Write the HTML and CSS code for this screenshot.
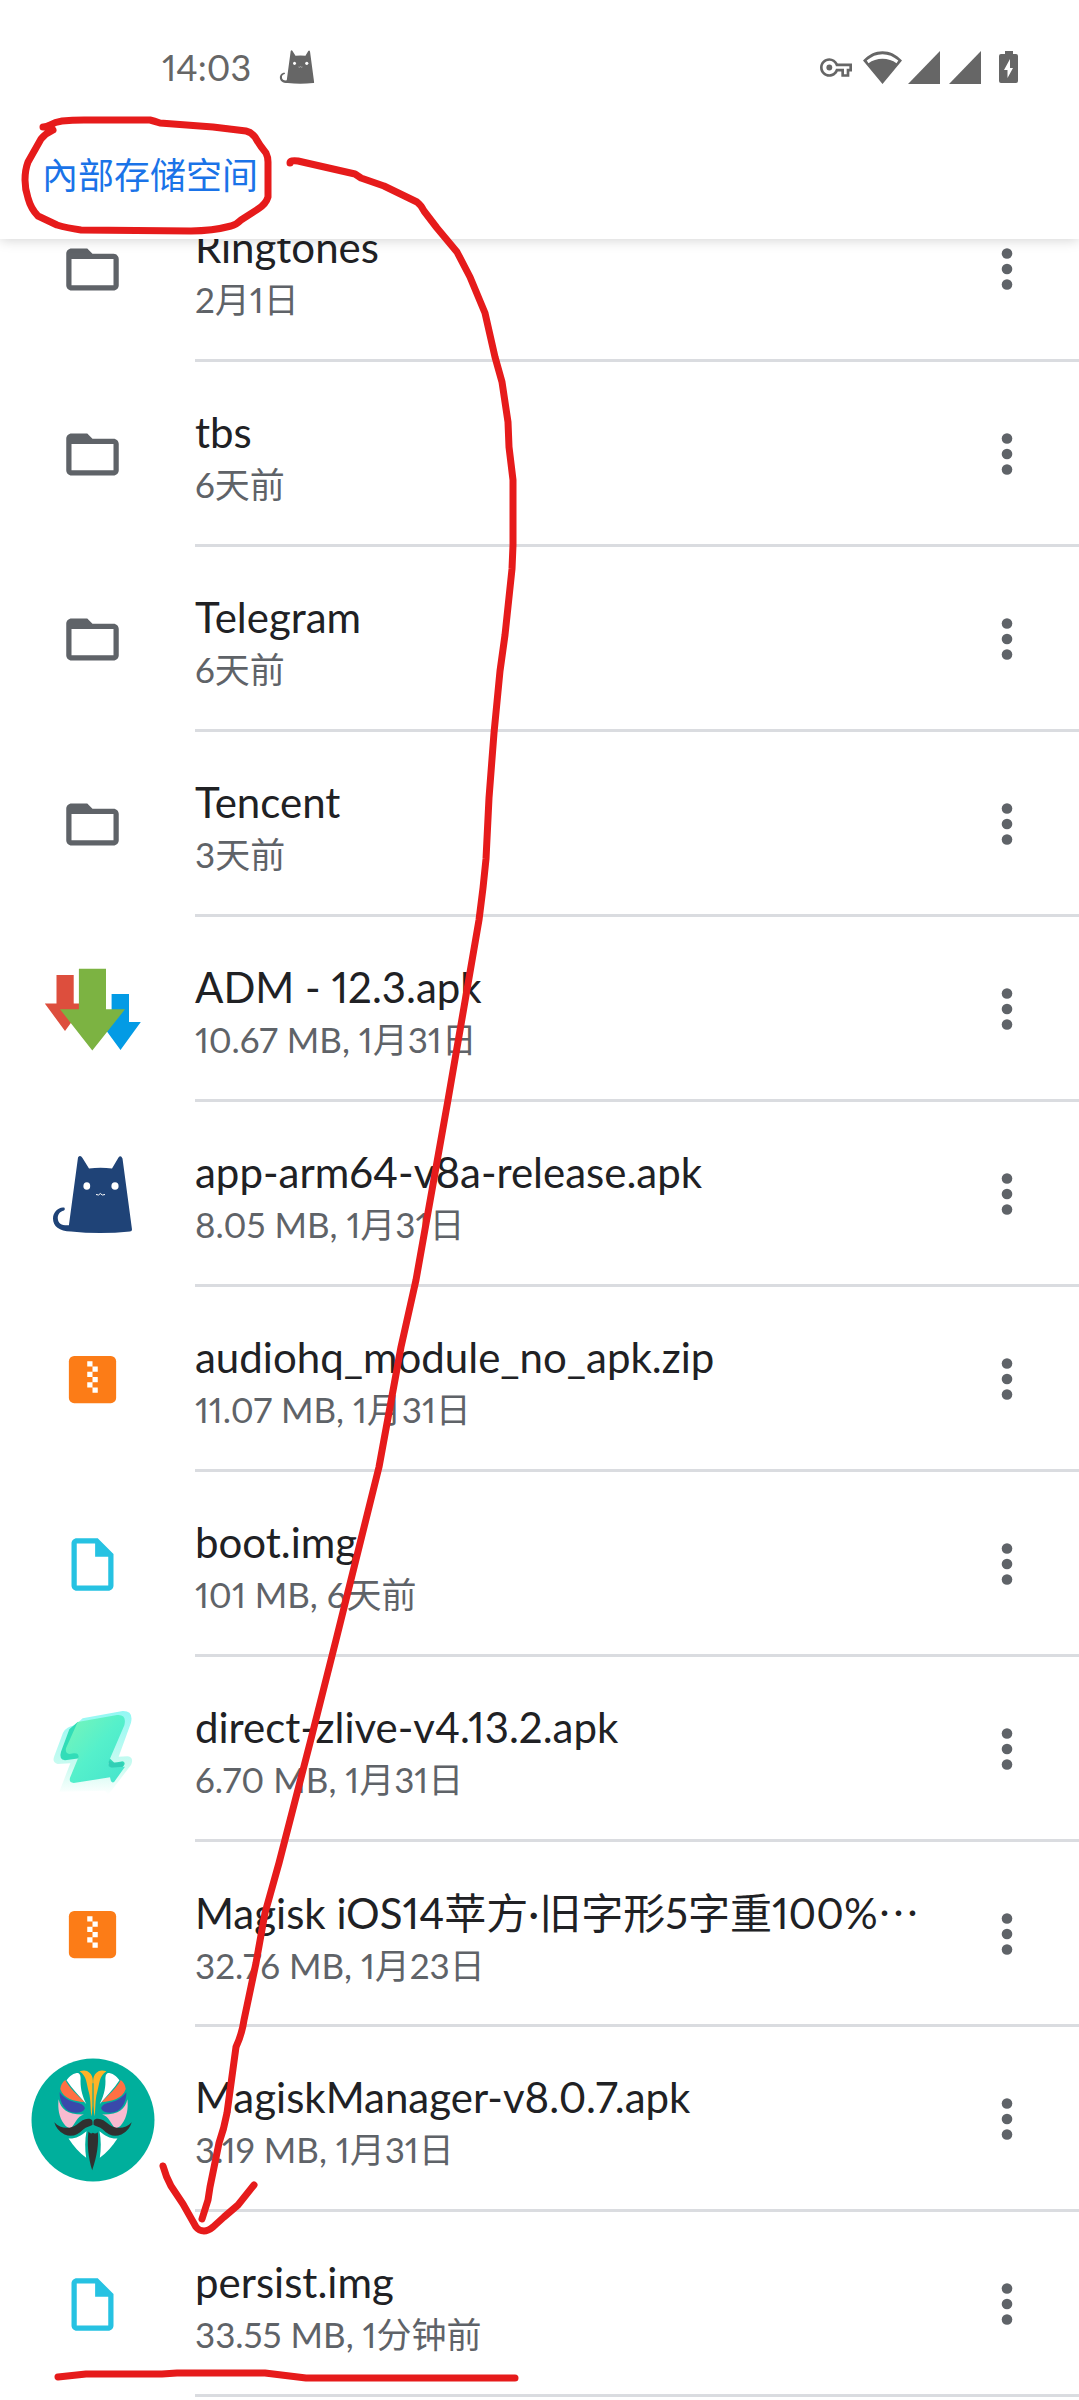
FILE: index.html
```html
<!DOCTYPE html>
<html lang="zh-CN">
<head>
<meta charset="utf-8">
<meta name="viewport" content="width=device-width, initial-scale=1">
<title>內部存储空间</title>
<link rel="stylesheet" href="styles.css">
</head>
<body>
<svg class="sprite" aria-hidden="true">
  <symbol id="folder" viewBox="0 0 24 24"><path d="M20 6h-8l-2-2H4c-1.1 0-2 .9-2 2v12c0 1.1.9 2 2 2h16c1.1 0 2-.9 2-2V8c0-1.1-.9-2-2-2zm0 12H4V8h16v10z"/></symbol>
  <symbol id="file" viewBox="0 0 24 24"><path d="M14 2H6c-1.1 0-2 .9-2 2v16c0 1.100.9 2 2 2h12c1.100 0 2-.9 2-2V8l-6-6zM6 20V4h7v5h5v11H6z"/></symbol>
  <symbol id="zip" viewBox="0 0 24 24"><rect x="3" y="3" width="18" height="18" rx="2"/><path fill="#fff" d="M10 5h2v2h-2zM12 7h2v2h-2zM10 9h2v2h-2zM12 11h2v2h-2zM10 13h2v2h-2zM12 15h2v2h-2z"/></symbol>
  <symbol id="cat" viewBox="20 20 83 83">
    <path d="M47 24.500Q49.200 21.500 51.500 25L58 35.500Q69.500 34 81 35.500L87.500 24.500Q89.700 21.500 91.500 25.500L101 96.500Q101 98.500 99 98.500Q69 101.500 40 98.500C28 98 22 93.500 22 85.500C22 79 28 73.500 33.500 74.800Q34.500 76.500 33 77.500C28.500 78.500 26.500 82 26.800 85.500C27 90.500 31 92.800 37.900 92.300Z"/>
    <g fill="#fff"><ellipse cx="55.800" cy="53" rx="3.400" ry="3.800"/><ellipse cx="84" cy="53" rx="3.600" ry="3.800"/></g>
    <path fill="none" stroke="#fff" d="M65 61.500Q68 63 69.300 60.500Q71 63 74 61.500"/>
  </symbol>
  <symbol id="more" viewBox="0 0 12 44"><circle cx="6" cy="6.500" r="5.300"/><circle cx="6" cy="22" r="5.300"/><circle cx="6" cy="37.500" r="5.300"/></symbol>
</svg>

<header class="top">
  <div class="status">
    <time class="clock">14:03</time>
    <svg class="status-cat"><use href="#cat"/></svg>
    <div class="signals">
      <svg width="32" height="19" viewBox="0 5 24 14"><path d="M22 19h-6v-4h-2.680c-1.140 2.420-3.600 4-6.320 4-3.860 0-7-3.140-7-7s3.140-7 7-7c2.720 0 5.170 1.580 6.320 4H24v6h-2v4zm-4-2h2v-4h2v-2H11.940l-.23-.67C11.010 8.340 9.110 7 7 7c-2.760 0-5 2.240-5 5s2.240 5 5 5c2.110 0 4.010-1.340 4.710-3.330l.23-.67H18v4z"/><circle cx="7" cy="12" r="2.200"/></svg>
      <svg class="wifi" width="39" height="33" viewBox="0 0 39 33"><path fill-rule="evenodd" d="M19.500 33L0 9.500C11-3 28-3 39 9.500ZM5.500 12.300C13 6.300 26 6.300 33.500 12.300L35.300 9.600C26 1 13 1 3.700 9.600Z"/></svg>
      <svg class="cell" width="32" height="33" viewBox="0 0 32 33"><path d="M32 0V33H0Z"/></svg>
      <svg class="cell second" width="32" height="33" viewBox="0 0 32 33"><path d="M32 0V33H0Z"/></svg>
      <svg class="battery" width="19" height="32" viewBox="0 0 19 32"><path d="M6 0h8v3h3q2 0 2 2v25q0 2-2 2H2q-2 0-2-2V5q0-2 2-2h4z"/><path fill="#fff" d="M11 8V17H14L8.500 27V19H5Z"/></svg>
    </div>
  </div>
  <nav class="crumbs"><a href="#">內部存储空间</a></nav>
</header>

<ul class="files">
  <li class="row"><svg class="icon small folder"><use href="#folder"/></svg><div class="body"><div class="text"><span class="name">Ringtones</span><span class="meta">2月1日</span></div><button class="more" aria-label="更多"><svg><use href="#more"/></svg></button></div></li>
  <li class="row"><svg class="icon small folder"><use href="#folder"/></svg><div class="body"><div class="text"><span class="name">tbs</span><span class="meta">6天前</span></div><button class="more" aria-label="更多"><svg><use href="#more"/></svg></button></div></li>
  <li class="row"><svg class="icon small folder"><use href="#folder"/></svg><div class="body"><div class="text"><span class="name">Telegram</span><span class="meta">6天前</span></div><button class="more" aria-label="更多"><svg><use href="#more"/></svg></button></div></li>
  <li class="row"><svg class="icon small folder"><use href="#folder"/></svg><div class="body"><div class="text"><span class="name">Tencent</span><span class="meta">3天前</span></div><button class="more" aria-label="更多"><svg><use href="#more"/></svg></button></div></li>
  <li class="row"><svg class="icon" viewBox="0 0 124 124"><path fill="#dd4e3d" d="M25.500 27H42.700V55.500H54L34 83L13.800 55.500H25.500Z"/><path fill="#039be5" d="M80.600 46H98V74H109.800L89.500 102L69 74H80.600Z"/><path fill="#7cb342" d="M47.900 20.700H75V61.300H94L61.300 102.500L29 61.300H47.900Z"/></svg><div class="body"><div class="text"><span class="name">ADM - 12.3.apk</span><span class="meta">10.67 MB, 1月31日</span></div><button class="more" aria-label="更多"><svg><use href="#more"/></svg></button></div></li>
  <li class="row"><svg class="icon cat" viewBox="0 0 124 124"><use href="#cat" x="20" y="20" width="83" height="83"/></svg><div class="body"><div class="text"><span class="name">app-arm64-v8a-release.apk</span><span class="meta">8.05 MB, 1月31日</span></div><button class="more" aria-label="更多"><svg><use href="#more"/></svg></button></div></li>
  <li class="row"><svg class="icon small zip"><use href="#zip"/></svg><div class="body"><div class="text"><span class="name">audiohq_module_no_apk.zip</span><span class="meta">11.07 MB, 1月31日</span></div><button class="more" aria-label="更多"><svg><use href="#more"/></svg></button></div></li>
  <li class="row"><svg class="icon small file"><use href="#file"/></svg><div class="body"><div class="text"><span class="name">boot.img</span><span class="meta">101 MB, 6天前</span></div><button class="more" aria-label="更多"><svg><use href="#more"/></svg></button></div></li>
  <li class="row"><svg class="icon" viewBox="-10 -36 372 372">
    <defs>
      <linearGradient id="zl" x1="0" y1="0" x2="1" y2="1"><stop offset="0" stop-color="#7af5b8"/><stop offset=".5" stop-color="#55f0cb"/><stop offset="1" stop-color="#45e4cd"/></linearGradient>
      <linearGradient id="zh" x1="0" y1="0" x2="0" y2="1"><stop offset="0" stop-color="#93f8f4"/><stop offset=".65" stop-color="#c9fbf0"/><stop offset="1" stop-color="#fff"/></linearGradient>
    </defs>
    <path fill="url(#zh)" d="M145 55L265 33Q298 32 290 68L253 170L280 169Q300 173 290 195L222 284L212 272L75 275L108 190L70 192Q52 188 60 168L86 98Q96 80 122 76Z"/>
    <path fill="#32ddb8" d="M130 66L105 88L80 155Q73 178 92 181L136 175L224 188L222 203L262 204Q278 190 266 184L240 188L200 150Z"/>
    <path fill="url(#zl)" d="M130 66L248 45Q278 42 270 76L224 183Q220 200 232 202L272 200L240 245Q235 250 230 244L227 232L118 249Q103 248 107 233L133 170Q132 158 118 160L105 162Q92 160 95 145Z"/>
    <path fill="#30c9b5" opacity=".7" d="M224 183Q218 202 232 203L264 200Q272 192 262 185Q245 193 224 183Z"/>
  </svg><div class="body"><div class="text"><span class="name">direct-zlive-v4.13.2.apk</span><span class="meta">6.70 MB, 1月31日</span></div><button class="more" aria-label="更多"><svg><use href="#more"/></svg></button></div></li>
  <li class="row"><svg class="icon small zip"><use href="#zip"/></svg><div class="body"><div class="text"><span class="name">Magisk iOS14苹方·旧字形5字重100%<span class="cjk">…</span></span><span class="meta">32.76 MB, 1月23日</span></div><button class="more" aria-label="更多"><svg><use href="#more"/></svg></button></div></li>
  <li class="row"><svg class="icon" viewBox="31 52 373 373">
    <circle cx="217.500" cy="238.500" r="185" fill="#00af9c"/>
    <g id="half">
      <path fill="#fff" d="M138 119C147 105 160 97 173 97Q182 100 180 122C180 148 187 170 197 190C176 166 155 145 138 119Z"/>
      <path fill="#ffb327" d="M177 92Q197 86 207 96Q217 105 217 120V195L213 228C209 203 212 180 205 155C197 127 200 108 177 92Z"/>
      <path fill="#ff7043" d="M134 118C147 143 168 161 192 184C160 182 130 175 119 145Q121 128 134 118Z"/>
      <path fill="#3949ab" d="M117 155C133 177 155 184 174 187Q193 193 193 204Q187 217 165 217C135 216 117 190 117 155Z"/>
      <path fill="#f8bbd0" d="M114 176C121 206 140 223 190 222C169 228 164 250 151 263Q140 264 130 250C115 230 111 203 114 176Z"/>
      <path fill="#303030" d="M101 245C120 267 150 266 169 252C184 240 195 232 211 236Q219 240 218 252C208 259 198 258 188 267C170 286 151 290 132 282Q108 270 101 245Z"/>
      <path fill="#fff" d="M144 294C166 295 181 286 198 272C193 297 193 326 197 352C176 337 160 318 144 294Z"/>
    </g>
    <use href="#half" transform="translate(435 0) scale(-1 1)"/>
    <path fill="#303030" d="M204 273Q210 282 217 277Q225 282 232 275C235 310 230 346 215 390C203 350 199 310 204 273Z"/>
    <path stroke="#00af9c" stroke-width="3" d="M217.500 128V256"/>
  </svg><div class="body"><div class="text"><span class="name">MagiskManager-v8.0.7.apk</span><span class="meta">3.19 MB, 1月31日</span></div><button class="more" aria-label="更多"><svg><use href="#more"/></svg></button></div></li>
  <li class="row"><svg class="icon small file"><use href="#file"/></svg><div class="body"><div class="text"><span class="name">persist.img</span><span class="meta">33.55 MB, 1分钟前</span></div><button class="more" aria-label="更多"><svg><use href="#more"/></svg></button></div></li>
</ul>

<!-- hand-drawn marks laid over the list -->
<svg class="marks" width="1079" height="2400" viewBox="0 0 1079 2400" aria-hidden="true">
  <path d="M43 127Q47 127 50 125Q55 122 62 121Q72 120 84 120H150Q154 121 160 123L213 127L246 131Q251 132 255 137Q260 146 266 153Q268 157 268 162V197Q266 204 258 209L241 220Q236 225 231 226Q212 231 191 231L81 230Q67 228 57 225L38 216Q31 209 28 198Q25 189 25 180Q25 170 28 162L41 139Q46 133 53 130"/>
  <path d="M290 163Q290 160 298 161L355 174L361 178L384 186L417 202Q421 205 424 211L437 228L457 252L470 277L485 313L495 357L502 382L508 422L509 447L513 480V545L512 569L505 635L500 671L494 733L489 798L486 859L483 888L479 920L448 1100L416 1280L401 1347L379 1467L336 1640L310 1743L279 1863L265 1913L256 1963L244 2020Q242 2034 236 2047L227 2113Q224 2129 219 2143L210 2187L208 2200L202 2219"/>
  <path d="M163 2166Q166 2177 171 2186L183 2204L196 2227Q199 2231 204 2231Q208 2231 213 2227L224 2217L238 2205L254 2185"/>
  <path d="M58 2377L86 2374H162L177 2373H265L306 2378H515"/>
</svg>
</body>
</html>
```
FILE: styles.css
```css
* {
  box-sizing: border-box;
}

body {
  position: relative;
  margin: 0;
  min-height: 100vh;
  overflow-x: hidden;
  background: #fff;
  color: #202124;
  font-family: Lato, "Noto Sans CJK SC", sans-serif;
  font-variant-numeric: proportional-nums;
}

svg {
  display: block;
  flex: none;
  fill: currentColor;
}

.sprite {
  position: absolute;
  width: 0;
  height: 0;
}

.top {
  position: relative;
  z-index: 1;
  background: #fff;
  box-shadow: 0 1px 12px rgba(0, 0, 0, 0.18);
}

.status {
  display: flex;
  align-items: center;
  height: 112px;
  padding: 22px 61px 0 162px;
  color: #666;
}

.clock {
  font-size: 36px;
  line-height: 44px;
}

.status-cat {
  width: 36px;
  height: 36px;
  margin-left: 28px;
}

.signals {
  display: flex;
  align-items: center;
  margin-left: auto;
}

.wifi {
  margin-left: 11px;
}

.cell {
  margin-left: 6px;
}

.second {
  margin-left: 9px;
}

.battery {
  margin-left: 18px;
}

.crumbs {
  display: flex;
  align-items: center;
  height: 127px;
  padding: 0 42px 2px;
}

.crumbs a {
  color: #1a73e8;
  font-size: 36px;
  line-height: 52px;
  text-decoration: none;
}

/* the list is scrolled partly under the header */
.files {
  margin: -62px 0 0;
  padding: 0;
  list-style: none;
}

.row {
  display: grid;
  grid-template-columns: 195px 1fr;
  height: 185px;
}

.icon {
  align-self: center;
  width: 124px;
  height: 124px;
  margin-left: 31px;
}

.icon.small {
  width: 63px;
  height: 63px;
  margin-left: 61px;
}

.folder {
  color: #5f6368;
}

.file {
  color: #26c2e2;
}

.zip {
  color: #fc7c17;
}

.cat {
  color: #1f4377;
}

.body {
  display: flex;
  align-items: center;
  justify-content: space-between;
  min-width: 0;
  border-bottom: 3px solid #dadce0;
}

.text {
  display: flex;
  flex-direction: column;
  min-width: 0;
  padding-top: 7px;
}

.name {
  font-size: 42px;
  line-height: 54px;
  white-space: nowrap;
}

.meta {
  color: #5f6368;
  font-size: 35px;
  line-height: 50px;
}

.cjk {
  font-family: "Noto Sans CJK SC", sans-serif;
}

.more {
  display: flex;
  flex: none;
  align-items: center;
  justify-content: center;
  width: 72px;
  height: 100px;
  margin-right: 36px;
  padding: 2px 0 0;
  border: 0;
  background: none;
  color: #5f6368;
}

.more svg {
  width: 12px;
  height: 44px;
}

.marks {
  position: absolute;
  z-index: 2;
  top: 0;
  left: 0;
  fill: none;
  stroke: #e61b1b;
  stroke-width: 7;
  stroke-linecap: round;
  stroke-linejoin: round;
  pointer-events: none;
}
```
